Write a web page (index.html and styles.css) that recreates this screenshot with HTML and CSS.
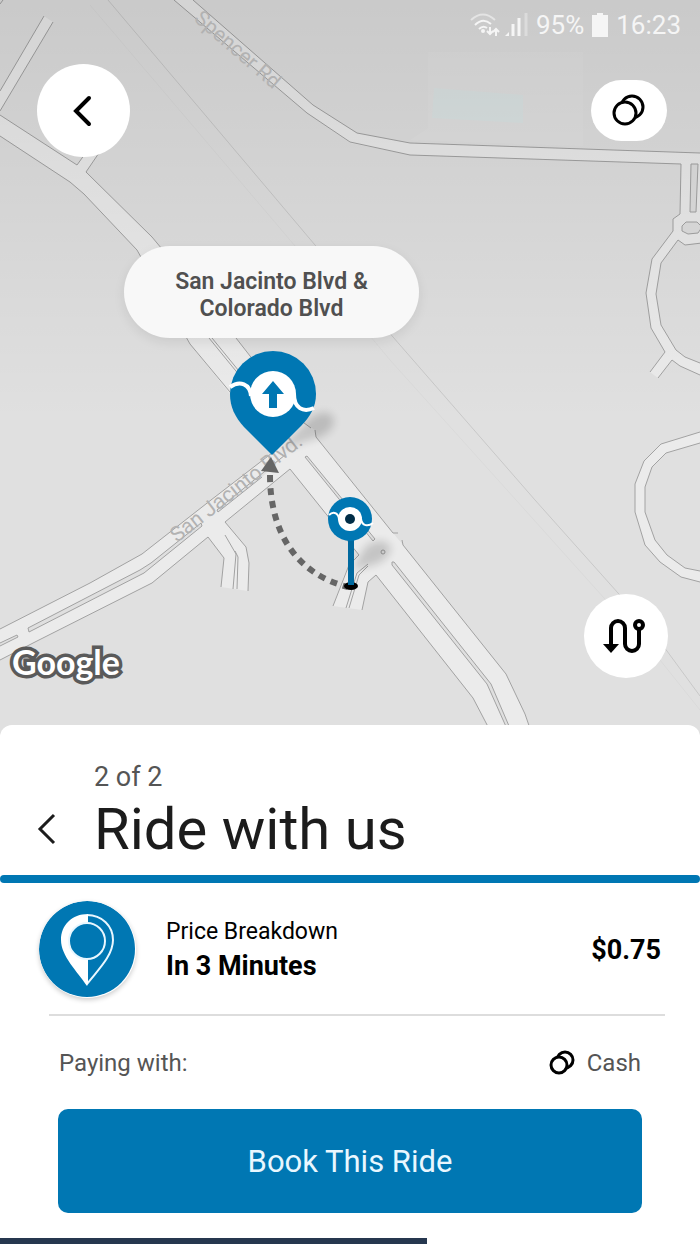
FILE: index.html
```html
<!DOCTYPE html>
<html lang="en">
<head>
  <meta charset="UTF-8">
  <meta name="viewport" content="width=device-width, initial-scale=1.0">
  <title>Ride with us</title>
  <link rel="stylesheet" href="styles.css">
</head>
<body>
  <main>
    <section class="map">
      <svg class="map-canvas" viewBox="0 0 700 740" preserveAspectRatio="xMidYMin slice" aria-hidden="true">
        <defs>
          <linearGradient id="shade" x1="0" y1="0" x2="0" y2="1">
            <stop offset="0" stop-color="#000" stop-opacity=".1" />
            <stop offset="1" stop-color="#000" stop-opacity="0" />
          </linearGradient>
          <filter id="soft" x="-50%" y="-50%" width="200%" height="200%">
            <feGaussianBlur stdDeviation="4" />
          </filter>
        </defs>

        <!-- areas -->
        <path class="block" d="M428 52H583V146L410 140L428 128Z" />
        <path class="water" d="M434 88L523 95V123L432 118Z" />

        <!-- railway -->
        <path class="rail" d="M108 0L315 245L393 337L535 500L618 593L667 651L700 696" />
        <path class="rail faint" d="M90 5L290 240L390 360L525 510L604 598L660 660L700 710" />

        <!-- road surfaces -->
        <g class="road">
          <path d="M44 16L0 91V111L53 22Z" />
          <path d="M0 115L77 165L90 147L103 147L86 172L152 237L236 338L300 420L315 430L316 437L393 533L403 545L506 674L525 714L534 740H495L473 698L376 575L368 582L362 610L333 606L345 573L359 555L290 469L190 344L137 250L84 194L70 182L0 136Z" />
          <path d="M272 453L211 500L142 554L90 583L0 629V660L35 642L152 583L208 537L224 558L221 587L248 591L249 563L246 547L225 522L290 469L310 440Z" />
          <path d="M193 0L313 105L357 133L410 143L700 153V243L685 245L678 240L661 263L656 294L661 325L676 350L685 357L700 363V375L680 366L672 360L658 378L650 372L665 352L651 328L646 293L652 259L673 231V219L680 214L681 164L410 155L350 143L307 113L174 0Z" />
          <path d="M700 432L661 444L644 461L635 484V512L645 545L660 562L681 577L700 582V571L685 568L667 555L655 540L645 512V487L652 467L666 453L700 443Z" />
        </g>

        <!-- road edges -->
        <g class="edge">
          <path d="M44 16L0 91M53 22L0 111M3 0L0 4" />
          <path d="M0 115L77 165L90 147M103 147L86 172L152 237L236 338L300 420L311 428M315 430L316 437L393 533L398 533M402 540L403 545L506 674L525 714L534 740" />
          <path d="M0 136L70 182L84 194L137 250L190 344L230 392L240 405M290 469L359 555L349 565L333 606M362 610L368 582L376 575L473 698L495 740" />
          <path d="M272 453L211 500L142 554L90 583L0 629M0 660L35 642L152 583L208 537L224 558L221 587M248 591L249 563L246 547L225 522L290 469" />
          <path d="M209 338L240 376M212 338L243 376" />
          <path class="median" d="M305 457L307 456L375 539L373 541ZM392 562L394 562L491 684L515 740H512L487 684L392 565Z" />
          <path class="median" d="M201 523L151 563L140 570L28 628L29 632L144 573L202 526ZM0 643L17 635L18 637L0 646M285 455L217 510L218 512L262 477" />
          <path d="M225 535L236 554L233 589M235 551L238 557L237 589" />
          <path d="M368 564L357 573L346 608M368 566L359 575L349 608" />
          <circle cx="383" cy="552" r="2" />
          <path d="M193 0L313 105L357 133L410 143L700 153M174 0L307 113L350 142L410 155L681 164L680 214L673 219V231L652 259L646 293L651 328L665 352L650 372M658 378L672 360L680 366L700 375M700 363L685 357L676 350L661 325L656 294L661 263L678 240L685 245L702 243" />
          <path class="median" d="M691 164L690 212H696L698 164ZM682 226L686 222L697 222L702 227L698 233L688 234L682 231Z" />
          <path d="M700 432L661 444L644 461L635 484V512L645 545L660 562L681 577L700 582M700 571L685 568L667 555L655 540L645 512V487L652 467L666 453L700 443" />
        </g>
        <rect width="700" height="420" fill="url(#shade)" />

        <text class="street" transform="translate(193 20) rotate(41)">Spencer Rd</text>
        <text class="street" transform="translate(177 543) rotate(-38)">San Jacinto Blvd.</text>

        <!-- pin shadows -->
        <path class="shadow" d="M278 450L310 418Q330 406 334 420Q334 434 310 440Z" filter="url(#soft)" />
        <path class="shadow" d="M352 570L366 546Q385 535 391 548Q388 562 368 566Z" filter="url(#soft)" />

        <!-- walking route -->
        <path class="walk" d="M270 475C270 532 296 574 348 587" />
        <path fill="#666" d="M271 457L279 473L261 471Z" />

        <!-- dropoff pin -->
        <path fill="#0077b3" d="M272 455L244 427C235 417 230 407 230 394A43 43 0 0 1 316 394C316 407 310 417 301 426Z" />
        <path class="wave" d="M230 387C240 380 250 384 251 396M294 394C294 408 303 413 314 408" />
        <circle cx="273" cy="394" r="23" fill="#fff" />
        <path fill="#0077b3" d="M273 381L284 394H277V408H269V394H262Z" />

        <!-- rider pin -->
        <ellipse cx="351" cy="586" rx="7" ry="4" />
        <path stroke="#00699f" stroke-width="6" d="M351 538V585" />
        <circle cx="350" cy="519" r="22" fill="#0077b3" />
        <path class="wave thin" d="M329 515C334 510 339 514 339 520M361 519C362 526 368 527 373 523" />
        <circle cx="350" cy="519" r="12" fill="#fff" />
        <circle cx="350" cy="519" r="5" fill="#012d47" />
      </svg>

      <p class="address">San Jacinto Blvd &amp; Colorado Blvd</p>

      <div class="status">
        <svg width="58" height="26" viewBox="0 0 58 26" aria-hidden="true">
          <g fill="none" stroke="#f5f5f5" stroke-width="2">
            <path opacity=".6" d="M1 8Q13 -3 25 8" />
            <path d="M5 13Q13 5 21 12M9 17Q13 13 17 16" />
            <path d="M20 15V22M17 19L20 22L23 19M26 24V17M23 20L26 17L29 20" />
            <path stroke-width="3" d="M43 12V24M49 6V24" />
            <path stroke-width="3" opacity=".4" d="M56 1V24" />
          </g>
          <circle cx="13" cy="19" r="2" fill="#f5f5f5" />
          <path fill="#f5f5f5" d="M35 24H39V20Z" />
        </svg>
        <span>95%</span>
        <svg width="16" height="24" viewBox="0 0 16 24" aria-hidden="true">
          <path fill="#f5f5f5" d="M5 0H11V2H16V24H0V2H5Z" />
        </svg>
        <span>16:23</span>
      </div>

      <div class="map-row">
        <button class="round back" type="button" aria-label="Back">
          <svg width="24" height="32" viewBox="0 0 24 32"><path d="M17 3L4 16L17 29" fill="none" stroke="#000" stroke-width="4" stroke-linecap="round" /></svg>
        </button>
        <button class="round payment" type="button" aria-label="Payment method">
          <svg width="34" height="34" viewBox="0 0 34 34" fill="#fff" stroke="#000" stroke-width="3"><circle cx="20" cy="13" r="11" /><circle cx="13" cy="19" r="11" /></svg>
        </button>
      </div>

      <div class="map-row bottom">
        <a class="google" href="#">Google</a>
        <button class="round route" type="button" aria-label="Show route">
          <svg width="48" height="36" viewBox="0 0 48 36" fill="none" stroke="#000" stroke-width="4">
            <path d="M9 26V10A7 7 0 0 1 23 10V26A7 7 0 0 0 37 26V11" />
            <circle cx="37" cy="7" r="4" />
            <path fill="#000" stroke="none" d="M1 26H17L9 35Z" />
          </svg>
        </button>
      </div>
    </section>

    <section class="sheet">
      <header class="sheet-header">
        <p class="step">2 of 2</p>
        <button class="sheet-back" type="button" aria-label="Previous step">
          <svg width="20" height="32" viewBox="0 0 20 32"><path d="M17 2L3 16L17 30" fill="none" stroke="#1c1c1c" stroke-width="3" /></svg>
        </button>
        <h1>Ride with us</h1>
      </header>
      <hr class="bar">

      <div class="ride">
        <svg class="ride-icon" width="97" height="97" viewBox="0 0 97 97" aria-hidden="true">
          <circle cx="48" cy="48" r="48" fill="#0077b3" />
          <path fill="none" stroke="#e9f7ff" stroke-width="2" d="M48 14C63 14 74 25 74 39C74 55 58 70 48 83" />
          <path fill="#fff" d="M49 13C33 13 22 24 22 39C22 55 38 70 48 85L49 83Z" />
          <circle cx="48" cy="40" r="18" fill="#0077b3" stroke="#e9f7ff" stroke-width="2" />
        </svg>
        <div class="ride-info">
          <p>Price Breakdown</p>
          <strong>In 3 Minutes</strong>
        </div>
        <strong class="price">$0.75</strong>
      </div>

      <div class="paying">
        <span>Paying with:</span>
        <button class="method" type="button">
          <svg width="26" height="26" viewBox="0 0 26 26" fill="#fff" stroke="#000" stroke-width="3"><circle cx="16" cy="10" r="8" /><circle cx="10" cy="15" r="8" /></svg>
          Cash
        </button>
      </div>

      <button class="book" type="button">Book This Ride</button>
      <div class="strip"></div>
    </section>
  </main>
</body>
</html>
```
FILE: styles.css
```css
* {
  margin: 0;
  padding: 0;
  border: 0;
  box-sizing: border-box;
}
:root {
  --primary-color: #0077b3;
  --font-roboto: "Roboto", sans-serif;
}

body,
button {
  font-family: var(--font-roboto);
}

button {
  cursor: pointer;
}

main {
  display: flex;
  flex-direction: column;
  min-height: 100vh;
  background-color: #e0e0e0;
}

/* map */
.map {
  position: relative;
  display: flex;
  flex: 1;
  flex-direction: column;
  min-height: 640px;
  z-index: 0;
}

.map-canvas {
  position: absolute;
  inset: 0;
  width: 100%;
  height: 100%;
  z-index: -1;
}

.block {
  fill: #e2e2e2;
}
.water {
  fill: #dde5e5;
}
.rail {
  fill: none;
  stroke: #c8c8c8;
  stroke-width: 1;
}
.rail.faint {
  stroke: #dadada;
}
.road {
  fill: #ebebeb;
}
.edge {
  fill: none;
  stroke: #a2a2a2;
  stroke-width: 1;
}
.median {
  fill: #dfdfdf;
}
.street {
  fill: #b2b2b2;
  font-family: var(--font-roboto);
  font-size: 21px;
}
.shadow {
  fill: #000;
  opacity: .16;
}
.walk {
  fill: none;
  stroke: #666;
  stroke-width: 6;
  stroke-dasharray: 7 6;
}
.wave {
  fill: none;
  stroke: #fff;
  stroke-width: 4;
}
.wave.thin {
  stroke-width: 2;
}

.address {
  position: absolute;
  top: 246px;
  left: calc(50% - 226px);
  width: 295px;
  padding: 22px 45px 16px;
  background-color: #f8f8f8;
  color: #505050;
  font-size: 23px;
  font-weight: 600;
  line-height: 27px;
  text-align: center;
  border-radius: 46px;
  box-shadow: 0 4px 12px rgba(0, 0, 0, .08);
}

.status {
  display: flex;
  justify-content: flex-end;
  align-items: center;
  gap: 8px;
  height: 50px;
  padding: 0 19px;
  color: #f5f5f5;
  font-size: 26px;
}

.map-row {
  display: flex;
  justify-content: space-between;
  align-items: center;
  padding: 14px 33px 0 37px;
}
.map-row.bottom {
  align-items: flex-end;
  margin-top: auto;
  padding: 0 32px 47px 12px;
}

.round {
  display: flex;
  justify-content: center;
  align-items: center;
  background-color: #fff;
  border-radius: 50px;
}
.back {
  width: 93px;
  height: 93px;
}
.payment {
  width: 76px;
  height: 61px;
}
.route {
  width: 84px;
  height: 84px;
}

.google {
  color: #fff;
  font-family: "Lato", sans-serif;
  font-size: 34px;
  font-weight: 700;
  line-height: 32px;
  text-decoration: none;
  -webkit-text-stroke: 7px #5a5a5a;
  paint-order: stroke fill;
}

/* bottom sheet */
.sheet {
  background-color: #fff;
  border-radius: 12px 12px 0 0;
}

.sheet-header {
  display: grid;
  grid-template-columns: 57px 1fr;
  align-items: center;
  padding: 34px 37px 12px;
}
.step {
  grid-column: 2;
  color: #555;
  font-size: 27px;
  line-height: 36px;
}
.sheet-back {
  height: 32px;
  background: none;
  text-align: left;
}
h1 {
  color: #1c1c1c;
  font-size: 58px;
  font-weight: 400;
  line-height: 68px;
}

.bar {
  height: 8px;
  background-color: var(--primary-color);
  border-radius: 4px;
}

.ride {
  display: flex;
  align-items: center;
  gap: 30px;
  margin: 0 35px 0 39px;
  padding: 18px 4px 16px 0;
}
.ride-icon {
  border-radius: 50%;
  box-shadow: 0 2px 5px rgba(0, 0, 0, .2);
}
.ride-info {
  flex: 1;
  font-size: 23px;
  line-height: 34px;
}
.ride-info strong,
.price {
  font-size: 27px;
}

.paying {
  display: flex;
  justify-content: space-between;
  align-items: center;
  margin: 0 35px 0 49px;
  padding: 31px 24px 30px 10px;
  border-top: 2px solid #ddd;
  color: #555;
  font-size: 24px;
  line-height: 32px;
}
.method {
  display: flex;
  align-items: center;
  gap: 12px;
  background: none;
  color: #555;
  font-size: 24px;
  line-height: 32px;
}

.book {
  display: block;
  width: calc(100% - 116px);
  margin: 0 58px;
  padding: 35px 20px 33px;
  background-color: var(--primary-color);
  color: #e9f7ff;
  font-size: 31px;
  line-height: 36px;
  border-radius: 10px;
}

.strip {
  width: 61%;
  height: 6px;
  margin-top: 25px;
  background-color: #26374f;
}
```
